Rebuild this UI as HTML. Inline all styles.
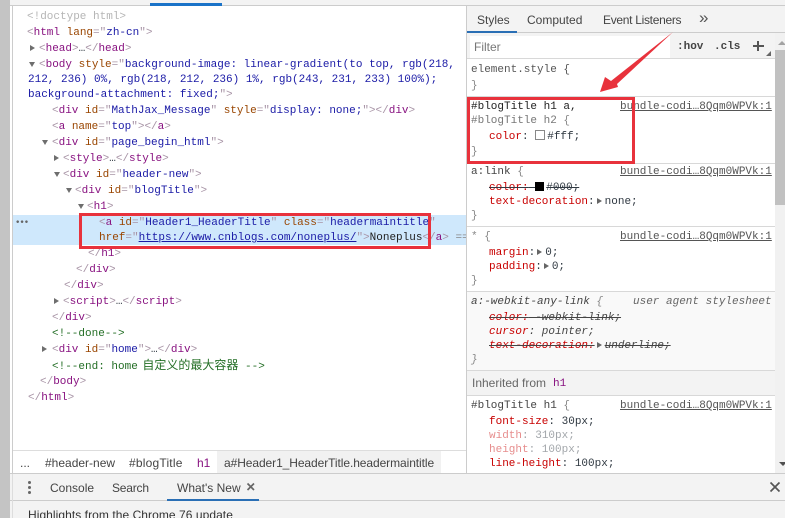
<!DOCTYPE html>
<html lang="zh-CN">
<head>
<meta charset="utf-8">
<title>DevTools</title>
<style>
html,body{margin:0;padding:0;background:#fff}
#p{position:relative;width:785px;height:518px;overflow:hidden;background:#fff;font:11px/16px "Liberation Mono",monospace;color:#303942}
#p div{position:absolute}
.l{white-space:pre;height:16px;margin-top:1px}
.s{font-family:"Liberation Sans","Noto Sans CJK SC",sans-serif;font-size:12px;color:#444;margin-top:0}
.b{color:#a894a6}.t{color:#881280}.n{color:#994500}.v{color:#1a1aa6}.c{color:#236e25}
.k{color:#c80000}.g{color:#888}.d{opacity:.45}
.st{text-decoration:line-through}
.a{width:0;height:0;border-left:3px solid transparent;border-right:3px solid transparent;border-top:5px solid #6e6e6e}
.r{width:0;height:0;border-top:3px solid transparent;border-bottom:3px solid transparent;border-left:5px solid #6e6e6e}
.ri{display:inline-block;width:0;height:0;border-top:3px solid transparent;border-bottom:3px solid transparent;border-left:5px solid #666;margin:0 3px 0 2px}
.src{left:620px;width:152px;text-decoration:underline;color:#555}
.ln{height:1px;background:#d8d8d8}
</style>
</head>
<body>
<div id="p">
<div style="left:0;top:0;width:10px;height:518px;background:#c4c4c4"></div>
<div style="left:10px;top:0;width:775px;height:5px;background:#f3f3f3"></div>
<div style="left:10px;top:5px;width:775px;height:1px;background:#ccc"></div>
<div style="left:150px;top:3px;width:72px;height:3px;background:#1a73c8"></div>
<div style="left:12px;top:6px;width:1px;height:468px;background:#ccc"></div>
<div style="left:466px;top:6px;width:1px;height:468px;background:#ccc"></div>

<div style="left:13px;top:215px;width:453px;height:30px;background:#cfe8fc"></div>

<div class="l" style="left:27px;top:8px;color:#b5b5b5">&lt;!doctype html&gt;</div>
<div class="l" style="left:27px;top:24px"><span class="b">&lt;</span><span class="t">html</span> <span class="n">lang</span><span class="b">="</span><span class="v">zh-cn</span><span class="b">"&gt;</span></div>
<div class="r" style="left:30px;top:45px"></div>
<div class="l" style="left:39px;top:40px"><span class="b">&lt;</span><span class="t">head</span><span class="b">&gt;</span>…<span class="b">&lt;/</span><span class="t">head</span><span class="b">&gt;</span></div>
<div class="a" style="left:29px;top:62px"></div>
<div class="l" style="left:39px;top:56px"><span class="b">&lt;</span><span class="t">body</span> <span class="n">style</span><span class="b">="</span><span class="v">background-image: linear-gradient(to top, rgb(218,</span></div>
<div class="l v" style="left:28px;top:71px">212, 236) 0%, rgb(218, 212, 236) 1%, rgb(243, 231, 233) 100%);</div>
<div class="l" style="left:28px;top:86px"><span class="v">background-attachment: fixed;</span><span class="b">"&gt;</span></div>
<div class="l" style="left:52px;top:102px"><span class="b">&lt;</span><span class="t">div</span> <span class="n">id</span><span class="b">="</span><span class="v">MathJax_Message</span><span class="b">"</span> <span class="n">style</span><span class="b">="</span><span class="v">display: none;</span><span class="b">"&gt;&lt;/</span><span class="t">div</span><span class="b">&gt;</span></div>
<div class="l" style="left:52px;top:118px"><span class="b">&lt;</span><span class="t">a</span> <span class="n">name</span><span class="b">="</span><span class="v">top</span><span class="b">"&gt;&lt;/</span><span class="t">a</span><span class="b">&gt;</span></div>
<div class="a" style="left:42px;top:140px"></div>
<div class="l" style="left:52px;top:134px"><span class="b">&lt;</span><span class="t">div</span> <span class="n">id</span><span class="b">="</span><span class="v">page_begin_html</span><span class="b">"&gt;</span></div>
<div class="r" style="left:54px;top:155px"></div>
<div class="l" style="left:63px;top:150px"><span class="b">&lt;</span><span class="t">style</span><span class="b">&gt;</span>…<span class="b">&lt;/</span><span class="t">style</span><span class="b">&gt;</span></div>
<div class="a" style="left:54px;top:172px"></div>
<div class="l" style="left:63px;top:166px"><span class="b">&lt;</span><span class="t">div</span> <span class="n">id</span><span class="b">="</span><span class="v">header-new</span><span class="b">"&gt;</span></div>
<div class="a" style="left:66px;top:188px"></div>
<div class="l" style="left:75px;top:182px"><span class="b">&lt;</span><span class="t">div</span> <span class="n">id</span><span class="b">="</span><span class="v">blogTitle</span><span class="b">"&gt;</span></div>
<div class="a" style="left:78px;top:204px"></div>
<div class="l" style="left:87px;top:198px"><span class="b">&lt;</span><span class="t">h1</span><span class="b">&gt;</span></div>
<div class="l" style="left:15px;top:214px;color:#666;font-size:9px;letter-spacing:-1px;font-weight:bold">•••</div>
<div class="l" style="left:99px;top:214px"><span class="b">&lt;</span><span class="t">a</span> <span class="n">id</span><span class="b">="</span><span class="v">Header1_HeaderTitle</span><span class="b">"</span> <span class="n">class</span><span class="b">="</span><span class="v">headermaintitle</span><span class="b">"</span></div>
<div class="l" style="left:99px;top:229px;width:367px;overflow:hidden"><span class="n">href</span><span class="b">="</span><span class="v" style="text-decoration:underline">https://www.cnblogs.com/noneplus/</span><span class="b">"&gt;</span><span style="color:#222">Noneplus</span><span class="b">&lt;/</span><span class="t">a</span><span class="b">&gt;</span> <span class="g">==</span></div>
<div class="l" style="left:88px;top:245px"><span class="b">&lt;/</span><span class="t">h1</span><span class="b">&gt;</span></div>
<div class="l" style="left:76px;top:261px"><span class="b">&lt;/</span><span class="t">div</span><span class="b">&gt;</span></div>
<div class="l" style="left:64px;top:277px"><span class="b">&lt;/</span><span class="t">div</span><span class="b">&gt;</span></div>
<div class="r" style="left:54px;top:298px"></div>
<div class="l" style="left:63px;top:293px"><span class="b">&lt;</span><span class="t">script</span><span class="b">&gt;</span>…<span class="b">&lt;/</span><span class="t">script</span><span class="b">&gt;</span></div>
<div class="l" style="left:52px;top:309px"><span class="b">&lt;/</span><span class="t">div</span><span class="b">&gt;</span></div>
<div class="l c" style="left:52px;top:325px">&lt;!--done--&gt;</div>
<div class="r" style="left:42px;top:346px"></div>
<div class="l" style="left:52px;top:341px"><span class="b">&lt;</span><span class="t">div</span> <span class="n">id</span><span class="b">="</span><span class="v">home</span><span class="b">"&gt;</span>…<span class="b">&lt;/</span><span class="t">div</span><span class="b">&gt;</span></div>
<div class="l c" style="left:52px;top:357px;font-family:'Liberation Mono','Noto Sans CJK SC',monospace">&lt;!--end: home <span style="font-size:12px;margin-left:-2px">自定义的最大容器</span> --&gt;</div>
<div class="l" style="left:40px;top:373px"><span class="b">&lt;/</span><span class="t">body</span><span class="b">&gt;</span></div>
<div class="l" style="left:28px;top:389px"><span class="b">&lt;/</span><span class="t">html</span><span class="b">&gt;</span></div>

<div style="left:79px;top:213px;width:346px;height:30px;border:3px solid #e8323c"></div>

<div style="left:13px;top:450px;width:453px;height:1px;background:#ddd"></div>
<div style="left:217px;top:451px;width:224px;height:22px;background:#f1f1f1"></div>
<div class="l s" style="left:20px;top:455px">...</div>
<div class="l s" style="left:45px;top:455px">#header-new</div>
<div class="l s" style="left:129px;top:455px;letter-spacing:.2px">#blogTitle</div>
<div class="l s" style="left:197px;top:455px;color:#881280">h1</div>
<div class="l s" style="left:224px;top:455px;letter-spacing:-.08px">a#Header1_HeaderTitle.headermaintitle</div>

<!-- styles pane -->
<div style="left:467px;top:6px;width:318px;height:26px;background:#f3f3f3"></div>
<div style="left:467px;top:32px;width:318px;height:1px;background:#ccc"></div>
<div style="left:467px;top:31px;width:50px;height:2px;background:#2a6fb5"></div>
<div class="l s" style="left:477px;top:12px">Styles</div>
<div class="l s" style="left:527px;top:12px">Computed</div>
<div class="l s" style="left:603px;top:12px;letter-spacing:-.3px">Event Listeners</div>
<div class="l s" style="left:699px;top:10px;font-size:17px;color:#555">»</div>

<div style="left:467px;top:33px;width:308px;height:25px;background:#f3f3f3"></div>
<div style="left:470px;top:36px;width:200px;height:22px;background:#fff"></div>
<div class="l s" style="left:474px;top:39px;color:#777">Filter</div>
<div class="l" style="left:677px;top:38px;color:#444;font-weight:bold">:hov</div>
<div class="l" style="left:714px;top:38px;color:#444;font-weight:bold">.cls</div>
<div style="left:753px;top:45px;width:11px;height:2px;background:#555"></div>
<div style="left:757px;top:41px;width:2px;height:10px;background:#555"></div>
<div style="left:766px;top:51px;width:0;height:0;border-left:5px solid transparent;border-bottom:5px solid #666"></div>
<div class="ln" style="left:467px;top:58px;width:308px"></div>

<div style="left:775px;top:33px;width:10px;height:441px;background:#f1f1f1"></div>
<div style="left:775px;top:50px;width:10px;height:155px;background:#c1c1c1"></div>
<div style="left:778px;top:41px;width:0;height:0;border-left:4px solid transparent;border-right:4px solid transparent;border-bottom:4px solid #a3a3a3"></div>
<div style="left:779px;top:462px;width:0;height:0;border-left:4px solid transparent;border-right:4px solid transparent;border-top:4px solid #505050"></div>

<div class="l" style="left:471px;top:61px;color:#555">element.style {</div>
<div class="l g" style="left:471px;top:77px">}</div>
<div class="ln" style="left:467px;top:96px;width:308px"></div>

<div class="l" style="left:471px;top:98px;color:#222">#blogTitle h1 a,</div>
<div class="l" style="left:471px;top:112px;color:#777">#blogTitle h2 <span class="g">{</span></div>
<div class="l" style="left:489px;top:128px"><span class="k">color</span>: <span style="display:inline-block;width:8px;height:8px;border:1px solid #888;background:#fff;vertical-align:-1px;margin-right:2px"></span>#fff;</div>
<div class="l g" style="left:471px;top:143px">}</div>
<div class="l src" style="top:98px">bundle-codi…8Qqm0WPVk:1</div>

<div class="ln" style="left:467px;top:163px;width:308px"></div>
<div class="l" style="left:471px;top:163px;color:#444">a:link <span class="g">{</span></div>
<div class="l src" style="top:163px">bundle-codi…8Qqm0WPVk:1</div>
<div class="l st" style="left:489px;top:179px"><span class="k">color:</span> <span style="display:inline-block;width:9px;height:9px;background:#000;vertical-align:-1px;margin-right:2px"></span>#000;</div>
<div class="l" style="left:489px;top:193px"><span class="k">text-decoration</span>:<span class="ri"></span>none;</div>
<div class="l g" style="left:471px;top:207px">}</div>
<div class="ln" style="left:467px;top:226px;width:308px"></div>

<div class="l g" style="left:471px;top:228px">* {</div>
<div class="l src" style="top:228px">bundle-codi…8Qqm0WPVk:1</div>
<div class="l" style="left:489px;top:244px"><span class="k">margin</span>:<span class="ri"></span>0;</div>
<div class="l" style="left:489px;top:258px"><span class="k">padding</span>:<span class="ri"></span>0;</div>
<div class="l g" style="left:471px;top:272px">}</div>
<div class="ln" style="left:467px;top:291px;width:308px"></div>

<div style="left:467px;top:292px;width:308px;height:78px;background:#f9f9f9"></div>
<div class="l" style="left:471px;top:293px;font-style:italic;color:#444">a:-webkit-any-link <span class="g">{</span></div>
<div class="l" style="left:633px;top:293px;font-style:italic;color:#666">user agent stylesheet</div>
<div class="l st" style="left:489px;top:309px;font-style:italic;color:#444"><span class="k">color:</span> -webkit-link;</div>
<div class="l" style="left:489px;top:323px;font-style:italic;color:#444"><span class="k">cursor</span>: pointer;</div>
<div class="l st" style="left:489px;top:337px;font-style:italic;color:#444"><span class="k">text-decoration:</span><span class="ri"></span>underline;</div>
<div class="l g" style="left:471px;top:351px;font-style:italic">}</div>

<div style="left:467px;top:370px;width:308px;height:25px;background:#f3f3f3"></div>
<div class="ln" style="left:467px;top:370px;width:308px"></div>
<div class="ln" style="left:467px;top:395px;width:308px"></div>
<div class="l s" style="left:472px;top:375px;color:#666">Inherited from</div>
<div class="l t" style="left:553px;top:375px">h1</div>

<div class="l" style="left:471px;top:397px;color:#444">#blogTitle h1 <span class="g">{</span></div>
<div class="l src" style="top:397px">bundle-codi…8Qqm0WPVk:1</div>
<div class="l" style="left:489px;top:413px"><span class="k">font-size</span>: 30px;</div>
<div class="l d" style="left:489px;top:427px"><span class="k">width</span>: 310px;</div>
<div class="l d" style="left:489px;top:441px"><span class="k">height</span>: 100px;</div>
<div class="l" style="left:489px;top:455px"><span class="k">line-height</span>: 100px;</div>

<svg style="position:absolute;left:0;top:0" width="785" height="518">
<polygon points="600,92 605,77 611,81 673,32 617,84 618,87" fill="#e8323c"/>
</svg>
<div style="left:467px;top:97px;width:162px;height:61px;border:3px solid #e8323c"></div>

<!-- drawer -->
<div style="left:10px;top:473px;width:775px;height:1px;background:#ccc"></div>
<div style="left:10px;top:474px;width:775px;height:44px;background:#f3f3f3"></div>
<div style="left:10px;top:500px;width:775px;height:1px;background:#ccc"></div>
<div style="left:12px;top:474px;width:1px;height:44px;background:#ddd"></div>
<div style="left:28px;top:481px;width:3px;height:3px;background:#666;border-radius:50%"></div>
<div style="left:28px;top:486px;width:3px;height:3px;background:#666;border-radius:50%"></div>
<div style="left:28px;top:491px;width:3px;height:3px;background:#666;border-radius:50%"></div>
<div class="l s" style="left:50px;top:480px">Console</div>
<div class="l s" style="left:112px;top:480px;letter-spacing:-.2px">Search</div>
<div class="l s" style="left:177px;top:480px">What's New</div>
<svg style="position:absolute;left:246px;top:482px" width="10" height="10"><path d="M1.5 1.5L8 8M8 1.5L1.5 8" stroke="#666" stroke-width="1.7" fill="none"/></svg>
<div style="left:167px;top:499px;width:92px;height:2px;background:#2a6fb5"></div>
<svg style="position:absolute;left:769px;top:481px" width="12" height="12"><path d="M1.5 1.5L10.5 10.5M10.5 1.5L1.5 10.5" stroke="#555" stroke-width="1.7" fill="none"/></svg>
<div class="l s" style="left:28px;top:507px;color:#333;letter-spacing:.06px">Highlights from the Chrome 76 update</div>
</div>
</body>
</html>
